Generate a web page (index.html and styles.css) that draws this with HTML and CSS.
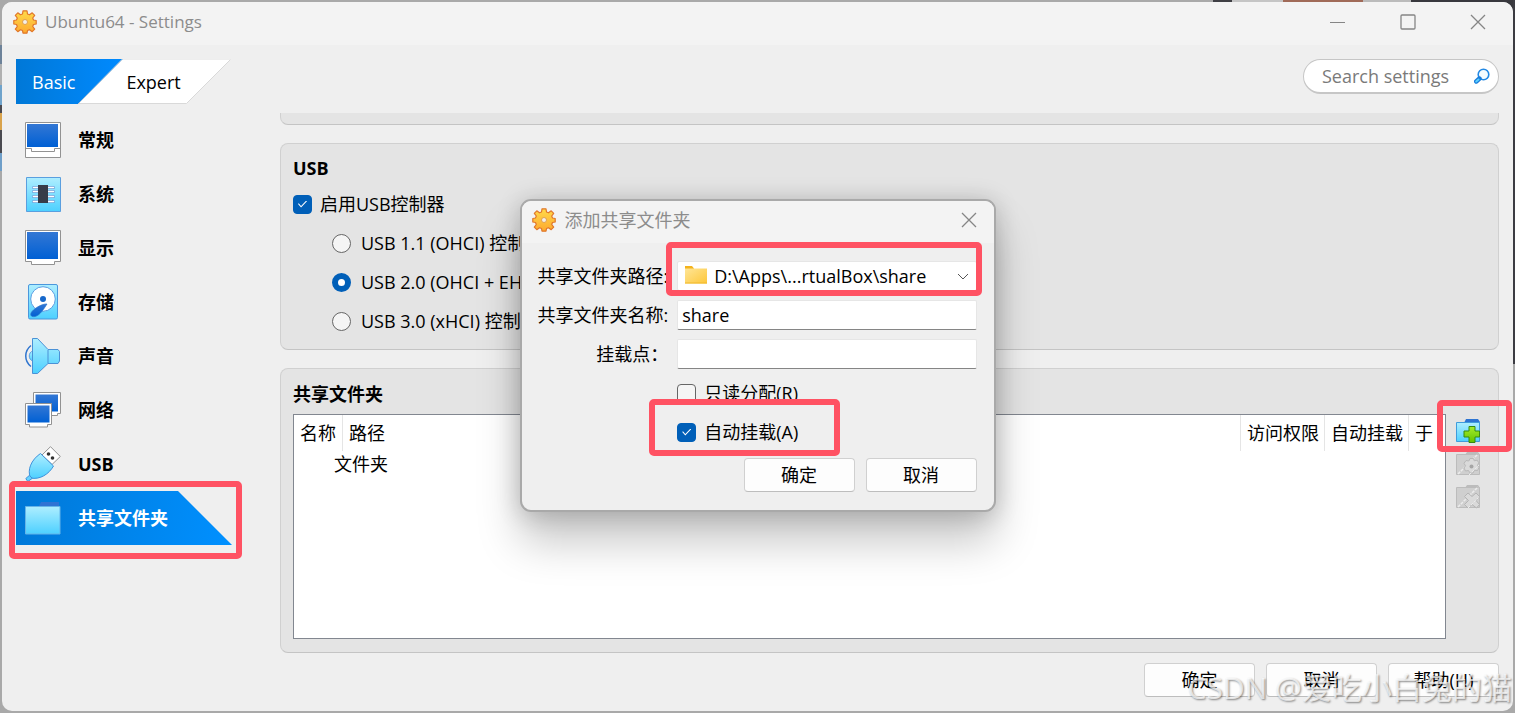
FILE: index.html
```html
<!DOCTYPE html>
<html lang="zh-CN">
<head>
<meta charset="utf-8">
<title>Ubuntu64 - Settings</title>
<link rel="stylesheet" href="styles.css">
</head>
<body>
<svg class="defs" aria-hidden="true">
  <defs>
    <linearGradient id="blue" x1="0" y1="0" x2="0" y2="1"><stop offset="0" stop-color="#3377d4"/><stop offset="1" stop-color="#0060d4"/></linearGradient>
    <linearGradient id="cyan" x1="0" y1="0" x2="0" y2="1"><stop offset="0" stop-color="#aeeeff"/><stop offset="1" stop-color="#4dd0ff"/></linearGradient>
    <linearGradient id="tab" x1="0" y1="0" x2="1" y2="0"><stop offset="0" stop-color="#0078d7"/><stop offset="1" stop-color="#008aff"/></linearGradient>
    <linearGradient id="gold" x1="0" y1="0" x2="0" y2="1"><stop offset="0" stop-color="#ffda4a"/><stop offset="1" stop-color="#fda92f"/></linearGradient>
    <linearGradient id="folder" x1="0" y1="0" x2="1" y2="1"><stop offset="0" stop-color="#ffe596"/><stop offset="1" stop-color="#fdc73a"/></linearGradient>
    <linearGradient id="green" x1="0" y1="0" x2="0" y2="1"><stop offset="0" stop-color="#a5ec2c"/><stop offset="1" stop-color="#62c400"/></linearGradient>
    <symbol id="gear" viewBox="0 0 24 24">
      <path d="M10 .8h4l.5 3.200 2 .8 2.700-2 2.500 2.500-2 2.700.8 2 2.700.5v3.500l-2.700.5-.8 2 2 2.700-2.500 2.500-2.700-2-2 .8-.5 2.700h-4l-.5-2.700-2-.8-2.700 2-2.500-2.500 2-2.700-.8-2-2.700-.5v-3.500l2.700-.5.8-2-2-2.700 2.500-2.500 2.700 2 2-.8z" fill="url(#gold)" stroke="#e0762a" stroke-width="1.200" stroke-linejoin="round"/>
      <circle cx="12" cy="12" r="2.500" fill="#f4f0ea" stroke="#e0a050"/>
    </symbol>
    <symbol id="close" viewBox="0 0 16 16"><path d="M1 1l14 14M15 1L1 15" fill="none" stroke="#858585" stroke-width="1.300"/></symbol>
  </defs>
</svg>

<div class="window">
  <header class="titlebar">
    <svg class="gear"><use href="#gear"/></svg>
    <h1>Ubuntu64 - Settings</h1>
    <div class="controls">
      <button aria-label="Minimize"><svg viewBox="0 0 16 16"><path d="M0 8.500h15" stroke="#858585"/></svg></button>
      <button aria-label="Maximize"><svg viewBox="0 0 16 16"><rect x="1" y="1" width="14" height="14" rx="1" fill="none" stroke="#858585" stroke-width="1.300"/></svg></button>
      <button aria-label="Close"><svg><use href="#close"/></svg></button>
    </div>
  </header>

  <div class="content">
    <aside class="sidebar">
      <div class="tabs" role="tablist">
        <svg class="tabs-shape" viewBox="0 0 216 45" aria-hidden="true">
          <path d="M106 .5h108.500l-44 44H62.500z" fill="#fff" stroke="#d9d9d9"/>
          <path d="M106.500 .5h108" stroke="#eee"/>
          <path d="M0 0h106.500L62 45H0z" fill="url(#tab)"/>
          <path d="M106.500 0L62 45" stroke="#b5c9dc"/>
        </svg>
        <button class="tab tab-active" role="tab" aria-selected="true">Basic</button>
        <button class="tab" role="tab" aria-selected="false">Expert</button>
      </div>
      <nav class="nav">
        <a href="#general"><svg viewBox="0 0 36 36"><path d="M.5.5h35v35H.5z" fill="#fff" stroke="#929292"/><path d="M2 2h31v23H2z" fill="url(#blue)"/><path d="M.5 26.500h6v3h23v-3h6" fill="none" stroke="#929292"/></svg>常规</a>
        <a href="#system"><svg viewBox="0 0 36 36"><path d="M1.500 1.500h34v34h-34z" fill="url(#cyan)" stroke="#5a9fdf"/><path d="M8.500 11.500h20M8.500 15.500h20M8.500 20.500h20M8.500 25.500h20" stroke="#6d9fd9" stroke-width="3" stroke-linecap="round"/><path d="M8.500 11.500h20M8.500 15.500h20M8.500 20.500h20M8.500 25.500h20" stroke="#fff" stroke-width="1.600" stroke-linecap="round"/><path d="M13 9h10v18H13z" fill="#373c49"/></svg>系统</a>
        <a href="#display"><svg viewBox="0 0 36 36"><path d="M.5.500h35v31h-6v3h-23v-3h-6z" fill="#fff" stroke="#929292"/><path d="M2 2h31v27H2z" fill="url(#blue)"/></svg>显示</a>
        <a href="#storage"><svg viewBox="0 0 36 36"><rect x="3.500" y=".5" width="29" height="34.500" rx="1.500" fill="url(#cyan)" stroke="#4b97dc"/><circle cx="18" cy="15" r="12.300" fill="#fff" stroke="#5b9ee2"/><circle cx="18" cy="15" r="3" fill="#1768cb"/><path d="M22 20c-5-.5-14 5-16 9-1 3 1 4 4 3.500 5-1 9-8 12-12.500z" fill="url(#blue)" stroke="#2b73c8" stroke-width=".7"/></svg>存储</a>
        <a href="#audio"><svg viewBox="0 0 36 36"><path d="M6 7.500C-1 13-1 23 6 28.500" fill="none" stroke="#2f75cf" stroke-width="1.500"/><path d="M8 13c-5 1-5 9 0 10z" fill="url(#cyan)" stroke="#5b9ee2"/><path d="M7.500.500h5L23 11.500h10l1.500 2v9.500L33 25.500H23L12.500 35.500h-5z" fill="url(#cyan)" stroke="#4b91d6" stroke-linejoin="round"/><path d="M23 12v13" stroke="#4b91d6"/></svg>声音</a>
        <a href="#network"><svg viewBox="0 0 36 36"><path d="M8.500.500h27v21h-3v2h-19v-2h-5z" fill="#fff" stroke="#929292"/><path d="M10.500 2.500h22.500v17H10.500z" fill="url(#blue)"/><path d="M.5 11.500h26v21h-4v2.500h-18v-2.500h-4z" fill="#fff" stroke="#929292"/><path d="M2.500 13.500h22v17h-22z" fill="url(#blue)"/></svg>网络</a>
        <a href="#usb"><svg viewBox="0 0 36 36"><path d="M17 9L25.500.7 35.300 10.500 27 18.500z" fill="#fff" stroke="#929292"/><circle cx="23.500" cy="8" r="1.800" fill="#333"/><circle cx="27.500" cy="12" r="1.800" fill="#333"/><path d="M15.500 7.500l13 12.500C24 28 15 34 5.500 32 2 24 6 14 15.500 7.500z" fill="url(#cyan)" stroke="#3d92dc"/><path d="M.8 32.500l3.500-3 3 2.800-4.500 3.200z" fill="#66d3ff" stroke="#3d92dc"/></svg>USB</a>
        <a href="#shared" class="current" aria-current="page"><svg viewBox="0 0 36 36"><path d="M14 6l2-4h18v5H14z" fill="#3073d3"/><path d="M.5 6.500h34.500v27.500H.5z" fill="url(#cyan)" stroke="#65b4e8"/></svg>共享文件夹<span class="mark mark-nav"></span></a>
      </nav>
    </aside>

    <main class="main">
      <div class="search">
        <input type="search" placeholder="Search settings" aria-label="Search settings">
        <svg viewBox="0 0 16 16" aria-hidden="true"><circle cx="9.500" cy="6.500" r="5.300" fill="#f5fcff" stroke="#2389e4" stroke-width="1.600"/><path d="M5.500 10.500l-3.300 3" stroke="#197cdb" stroke-width="4.400" stroke-linecap="round"/><path d="M4.500 11.500l-2.300 2" stroke="#5bd0ff" stroke-width="2" stroke-linecap="round"/></svg>
      </div>

      <div class="panel panel-tail"></div>

      <section class="panel usb">
        <h2>USB</h2>
        <label class="option"><input type="checkbox" checked>启用USB控制器</label>
        <div class="radios">
          <label class="option"><input type="radio" name="usb">USB 1.1 (OHCI) 控制器</label>
          <label class="option"><input type="radio" name="usb" checked>USB 2.0 (OHCI + EHCI) 控制器</label>
          <label class="option"><input type="radio" name="usb">USB 3.0 (xHCI) 控制器</label>
        </div>
      </section>

      <section class="panel shared">
        <h2>共享文件夹</h2>
        <div class="shared-body">
          <div class="table-frame">
            <table>
              <colgroup><col class="col-name"><col><col class="col-wide"><col class="col-wide"><col class="col-at"></colgroup>
              <thead><tr><th>名称</th><th>路径</th><th>访问权限</th><th>自动挂载</th><th>于</th></tr></thead>
              <tbody><tr><td colspan="5">文件夹</td></tr></tbody>
            </table>
          </div>
          <div class="tools">
            <button aria-label="添加共享文件夹">
              <svg viewBox="0 0 24 24"><path d="M8 4l2-4h12l2 3v19H8z" fill="#2d74d2"/><path d="M.5 3.500h23v19H.5z" fill="url(#cyan)" stroke="#3f9cdc"/><path d="M13 7.500h6v4.500h4.500v6H19v5.500h-6V18H8v-6h5z" fill="url(#green)" stroke="#358a13"/></svg>
              <span class="mark mark-add"></span>
            </button>
            <button aria-label="编辑共享文件夹" disabled>
              <svg viewBox="0 0 24 24"><path d="M9 3l2-3h11l2 3z" fill="#bcbcbc"/><path d="M.5 2.500h23v20H.5z" fill="#cfcfcf" stroke="#bcbcbc"/><path d="M2 22L22 2" stroke="#ececec" stroke-width="1.500" stroke-dasharray="3 1"/><path d="M14 6.500h3.500l.7 2.300 3-.6 1.500 2.500-1.200 2.800 1.500 2-1.500 3-3-.3-1.500 2.800h-3l-1.500-2.500-3 .5-1.500-3 1.500-2.200-1.500-2.500 2-2.800 2.800.5z" fill="#dadada" stroke="#b8b8b8"/><path d="M13 23L23 13" stroke="#ececec" stroke-dasharray="3 1"/><circle cx="15.500" cy="14.500" r="2" fill="#a5a5a5"/></svg>
            </button>
            <button aria-label="移除共享文件夹" disabled>
              <svg viewBox="0 0 24 24"><path d="M9 3l2-3h11l2 3z" fill="#bcbcbc"/><path d="M.5 2.500h23v20H.5z" fill="#cfcfcf" stroke="#bcbcbc"/><path d="M2 22L22 2" stroke="#ececec" stroke-width="1.500" stroke-dasharray="3 1"/><path d="M12 8l4 3.500L20 8l3.500 3.500-3.500 4 3.500 4-3 3.500-4.500-3.500-4 3.500-3.500-3.500 4-4-4-4z" fill="#dadada" stroke="#b5b5b5"/><path d="M12 23L23 12" stroke="#ececec" stroke-dasharray="3 1"/></svg>
            </button>
          </div>
        </div>
      </section>

      <footer class="actions">
        <button class="push">确定</button>
        <button class="push">取消</button>
        <button class="push">帮助(H)</button>
      </footer>
    </main>
  </div>
</div>

<div class="overlay">
  <form class="dialog" role="dialog" aria-labelledby="dialog-title">
    <header class="dialog-title">
      <svg class="gear"><use href="#gear"/></svg>
      <h2 id="dialog-title">添加共享文件夹</h2>
      <button type="button" class="dialog-close" aria-label="Close"><svg><use href="#close"/></svg></button>
    </header>
    <div class="fields">
      <label for="path">共享文件夹路径:</label>
      <div class="combo">
        <select id="path"><option>D:\Apps\...rtualBox\share</option></select>
        <svg class="combo-folder" viewBox="0 0 24 20" aria-hidden="true"><path d="M1 1h7l2 2.500v5H1z" fill="#f4b31c"/><path d="M1 3.500h22v15H1z" fill="url(#folder)"/><path d="M1 18h22" stroke="#f0b92d"/></svg>
        <svg class="combo-arrow" viewBox="0 0 12 8" aria-hidden="true"><path d="M1 1l5 5 5-5" fill="none" stroke="#555"/></svg>
        <span class="mark mark-path"></span>
      </div>
      <label for="name">共享文件夹名称:</label>
      <input id="name" type="text" value="share">
      <label for="mount" class="mount-label">挂载点：</label>
      <input id="mount" type="text">
      <label class="option field-option"><input type="checkbox">只读分配(R)</label>
      <label class="option field-option"><input type="checkbox" checked>自动挂载(A)<span class="mark mark-auto"></span></label>
    </div>
    <div class="dialog-actions">
      <button type="button" class="push">确定</button>
      <button type="button" class="push">取消</button>
    </div>
  </form>
</div>
<div class="watermark">CSDN @爱吃小白兔的猫</div>
</body>
</html>
```

FILE: styles.css
```css
* { box-sizing: border-box; }

body {
  position: relative;
  margin: 0;
  padding: 2px;
  min-height: 100vh;
  display: flex;
  overflow: hidden;
  color: #000;
  font: 18px/26px "Open Sans", "Noto Sans CJK SC", sans-serif;
  background:
    linear-gradient(#6d8299 0 19px, #b0b0b0 19px 40px, #6fa3cb 40px 60px, #4a4a50 60px 68px, #d9a34c 68px 85px, #4a4a50 85px 108px, #6f9fc9 108px 126px, #a9a9a9 126px) 0 45px / 2px 100% no-repeat,
    linear-gradient(#3c3c42 0 364px, #a9a9a9 364px) right top / 2px 100% no-repeat,
    linear-gradient(90deg, #3f3f44 0 19px, #c5c5c5 19px 70px, #a06a58 70px 150px, #bbb 150px 198px, #38383d 198px) right top / 302px 12px no-repeat,
    #a9a9a9;
}

h1, h2 { margin: 0; font-size: 18px; }
button, input, select { margin: 0; font: inherit; color: inherit; }
button { padding: 0; border: 0; background: none; }
svg { display: block; flex: none; }
.defs { position: absolute; width: 0; height: 0; }
.gear { width: 24px; height: 24px; }

.mark {
  position: absolute;
  z-index: 2;
  border: 6px solid #ff5263;
  border-radius: 5px;
  pointer-events: none;
}

.window {
  flex: 1;
  display: flex;
  flex-direction: column;
  border-radius: 10px;
  overflow: hidden;
  background: #efefef;
}

.titlebar {
  display: flex;
  align-items: center;
  gap: 8px;
  height: 43px;
  padding: 0 27px 4px 11px;
  background: #f3f3f3;
}
.titlebar h1 { flex: 1; font-size: 17px; font-weight: 400; color: #8c8c8c; }
.controls { display: flex; gap: 54px; }
.controls svg, .dialog-close svg { width: 16px; height: 16px; }

.content {
  flex: 1;
  display: grid;
  grid-template-columns: 216px minmax(0, 1fr);
  column-gap: 48px;
  padding: 14px 14px;
}

.tabs { position: relative; display: flex; height: 45px; }
.tabs-shape { position: absolute; inset: 0; width: 216px; height: 45px; }
.tab { position: relative; padding: 0 16px; }
.tab + .tab { padding-left: 35px; }
.tab-active { color: #fff; }

.nav { display: flex; flex-direction: column; padding-top: 9px; }
.nav a {
  position: relative;
  display: flex;
  align-items: center;
  gap: 17px;
  height: 54px;
  padding-left: 9px;
  color: #000;
  font-weight: 700;
  text-decoration: none;
}
.nav svg { width: 36px; height: 36px; }
.nav .current { z-index: 0; color: #fff; }
.nav .current::before {
  content: "";
  position: absolute;
  z-index: -1;
  inset: 0;
  background: linear-gradient(100deg, #0078d7, #0090ff);
  clip-path: polygon(0 0, 75% 0, 100% 100%, 0 100%);
}
.mark-nav { inset: -10px -10px -14px -7px; }

.main { display: flex; flex-direction: column; }
.search { position: relative; align-self: flex-end; width: 196px; margin-bottom: 19px; }
.search input {
  appearance: none;
  display: block;
  width: 100%;
  height: 35px;
  padding: 0 36px 0 18px;
  border: 1px solid #c6c6c6;
  border-bottom-width: 2px;
  border-radius: 18px;
  background: #fff;
}
.search input::placeholder { color: #7a7a7a; opacity: 1; }
.search input::-webkit-search-cancel-button { display: none; }
.search svg { position: absolute; right: 9px; top: 9px; width: 16px; height: 16px; }

.panel {
  border: 1px solid #d0d0d0;
  border-bottom-color: #c4c4c4;
  border-radius: 8px;
  background: #e4e4e4;
}
.panel-tail { height: 12px; border-top: 0; border-radius: 0 0 8px 8px; }
.usb { margin: 18px 0; padding: 11px 12px 13px; }
.usb > .option { margin-top: 8px; }
.radios { display: flex; flex-direction: column; gap: 9px; padding: 9px 0 0 39px; }

.option { display: flex; align-items: center; gap: 8px; height: 30px; }
.radios .option { gap: 10px; }
.option input {
  appearance: none;
  flex: none;
  width: 19px;
  height: 19px;
  border: 1px solid #666;
  background: #f5f5f5;
}
.option input[type="checkbox"] { border-radius: 4px; }
.option input[type="radio"] { border-radius: 50%; }
.option input[type="radio"]:checked { border: 6px solid #005fb8; background: #fff; }
.option input[type="checkbox"]:checked {
  display: grid;
  place-content: center;
  border-color: #005fb8;
  background: #005fb8;
}
.option input[type="checkbox"]:checked::before {
  content: "";
  width: 9px;
  height: 7px;
  background: #fff;
  clip-path: polygon(0 50%, 8% 40%, 34% 78%, 92% 0, 100% 10%, 34% 100%);
}

.shared { flex: 1; display: flex; flex-direction: column; padding: 12px 18px 13px 12px; }
.shared-body { flex: 1; display: flex; gap: 10px; margin-top: 7px; }
.table-frame { flex: 1; border: 1px solid #828790; background: #fff; }
.tools { display: flex; flex-direction: column; gap: 9px; padding-top: 5px; }
.tools button { position: relative; width: 24px; height: 24px; }
.tools svg { width: 24px; height: 24px; }
.mark-add { inset: -19px -32px -9px -19px; }

table { width: 100%; table-layout: fixed; border-collapse: separate; border-spacing: 0; }
th { height: 36px; padding: 0 0 0 6px; font-weight: 400; text-align: left; white-space: nowrap; border-right: 1px solid #e5e5e5; }
th:last-child { border-right: 0; }
td { height: 26px; padding: 0 0 0 40px; }
.col-name { width: 49px; }
.col-wide { width: 84px; }
.col-at { width: 36px; }

.actions { display: flex; justify-content: flex-end; gap: 11px; margin-top: 10px; }
.push {
  width: 111px;
  height: 34px;
  border: 1px solid #d0d0d0;
  border-bottom-color: #bdbdbd;
  border-radius: 4px;
  background: #fdfdfd;
}

.overlay { position: absolute; inset: 0; display: grid; place-items: center; padding-bottom: 2px; }
.dialog {
  width: 476px;
  border: 2px solid #a9a9a9;
  border-radius: 11px;
  background: #efefef;
  box-shadow: 0 30px 44px rgba(0, 0, 0, 0.22), 0 2px 24px rgba(0, 0, 0, 0.2);
}
.dialog-title {
  display: flex;
  align-items: center;
  gap: 9px;
  height: 42px;
  padding: 0 17px 4px 10px;
  border-radius: 9px 9px 0 0;
  background: #f3f3f3;
}
.dialog-title h2 { flex: 1; font-weight: 400; color: #8c8c8c; }

.fields {
  display: grid;
  grid-template-columns: max-content minmax(0, 1fr);
  gap: 9px;
  padding: 18px 17px 11px 16px;
  align-items: center;
}
.fields > label { white-space: nowrap; }
.mount-label { justify-self: end; }
.fields > input, .combo select {
  display: block;
  width: 100%;
  height: 30px;
  padding: 0 4px;
  border: 1px solid #e6e6e6;
  border-bottom-color: #858585;
  border-radius: 2px;
  background: #fff;
}
.combo { position: relative; }
.combo select { appearance: none; padding-left: 36px; border-bottom-color: #e6e6e6; }
.combo-folder { position: absolute; left: 7px; top: 4px; width: 24px; height: 20px; }
.combo-arrow { position: absolute; right: 8px; top: 12px; width: 12px; height: 8px; }
.mark-path { inset: -19px -5px -5px -11px; }
.field-option { position: relative; grid-column: 2; }
.mark-auto { inset: -18px 137px -9px -28px; }
.dialog-actions { display: flex; justify-content: flex-end; gap: 11px; padding: 0 17px 18px; }

.watermark {
  position: absolute;
  right: 3px;
  bottom: 4px;
  z-index: 3;
  font-size: 30px;
  line-height: 42px;
  white-space: nowrap;
  color: rgba(255, 255, 255, 0.7);
  text-shadow: 1px 1px 2px rgba(0, 0, 0, 0.45);
  pointer-events: none;
}
```
